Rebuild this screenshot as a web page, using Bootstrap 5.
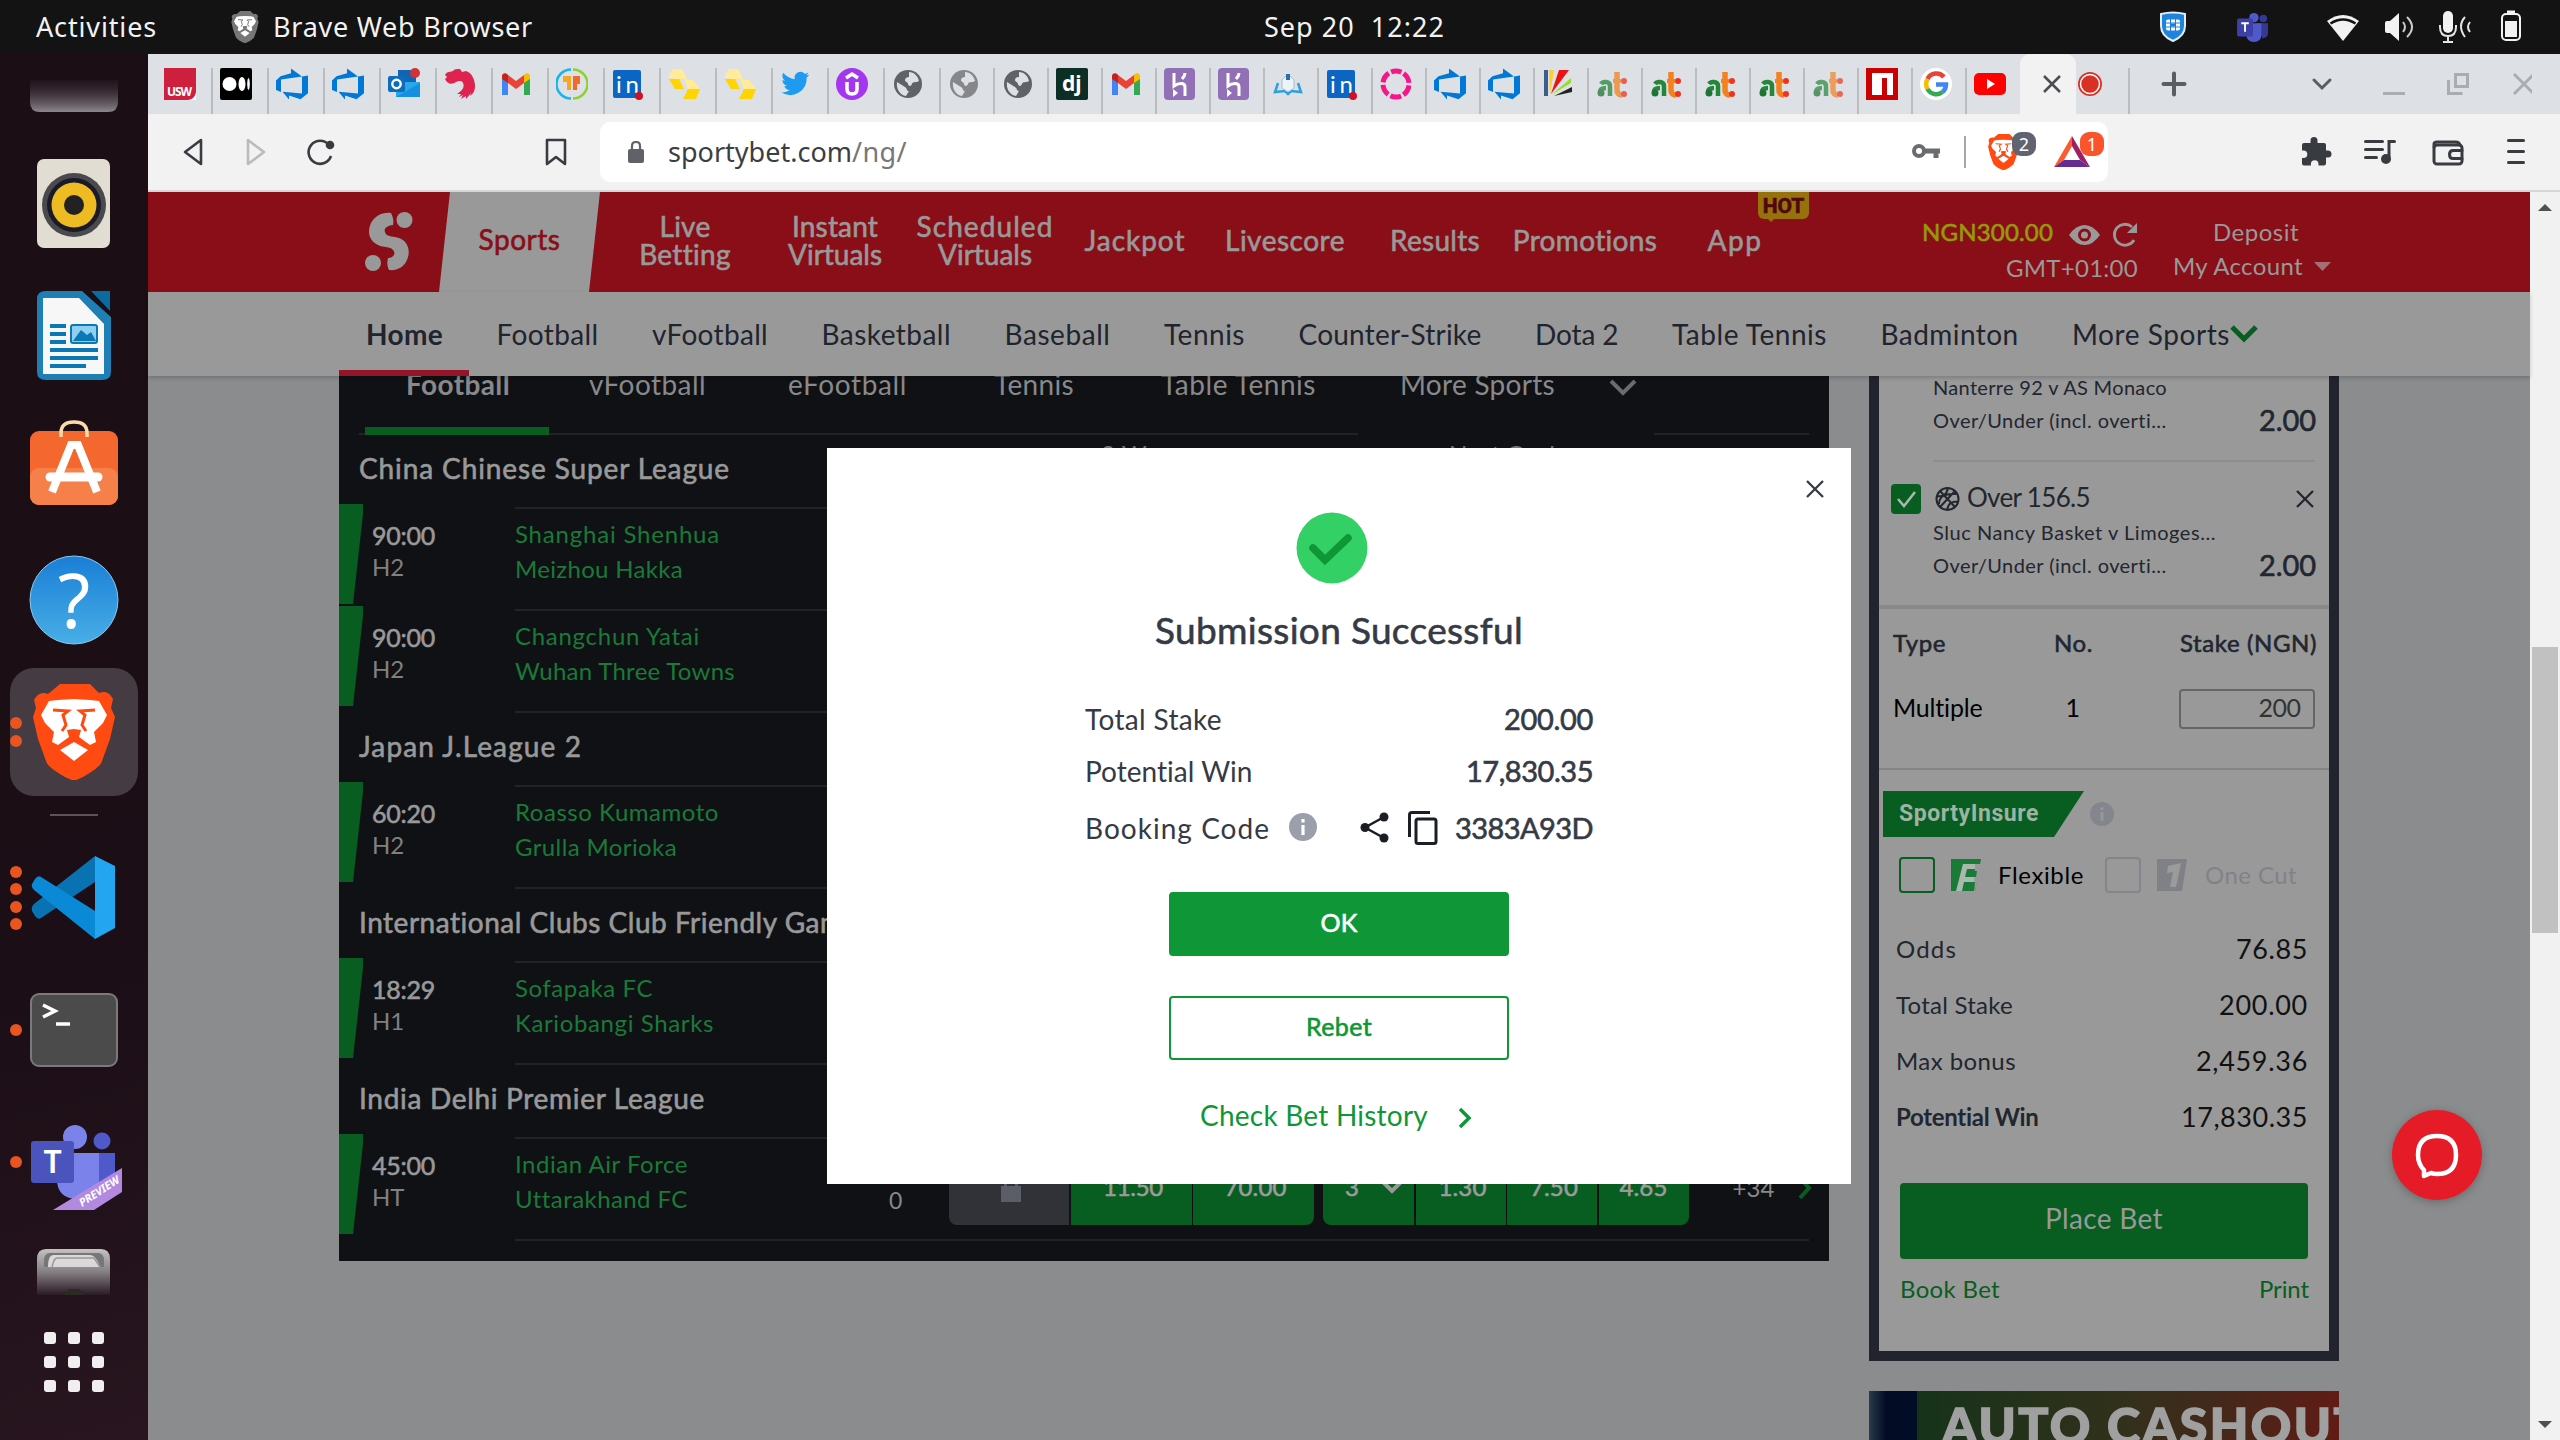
<!DOCTYPE html>
<html lang="en">
<head>
<meta charset="utf-8">
<title>SportyBet</title>
<link href="https://cdn.jsdelivr.net/npm/bootstrap@5.3.0/dist/css/bootstrap.min.css" rel="stylesheet">
<script src="https://cdn.jsdelivr.net/npm/bootstrap@5.3.0/dist/js/bootstrap.bundle.min.js"></script>
<style>
body{width:2560px;height:1440px;overflow:hidden;margin:0;font-family:Lato,"Noto Sans",sans-serif;font-size:28px;line-height:1.2;background:#8b8c8e;color:#22262f}
svg{display:block;flex:none}
[data-w]{display:inline-block;white-space:nowrap;flex:none}
.med{-webkit-text-stroke:.6px currentColor}
.sysbar{height:54px;background:#131313;color:#f2f2f2;font-family:"Noto Sans",sans-serif;font-size:27px;line-height:54px}
.dock{width:148px;height:1386px;background:linear-gradient(165deg,#1b0e15 0,#1b0e16 65%,#28151f 100%)}
.dock text{font-family:"Noto Sans",sans-serif}
.tabstrip{height:60px;background:#dde1e5;padding-left:9px}
.btab{width:54px;height:46px;margin-top:14px;padding-left:7px;border-right:2px solid #b9bdbf}
.btab.wide{width:56px}
.btab text{font-family:"Noto Sans",sans-serif;font-weight:700}
.activetab{width:56px;height:60px;background:#f2f2f2;border-radius:10px 10px 0 0}
.toolbar{height:78px;background:#f2f2f2;border-bottom:2px solid #d3d7da}
.omnibox{width:1508px;height:60px;background:#fff;border-radius:10px;font-family:"Noto Sans",sans-serif;font-size:27px;line-height:58px;color:#3b3e42}
.pagecol{width:2382px}
.scrollcol{width:30px;background:#f1f1f1}
.scrollthumb{width:26px;height:286px;background:#c1c1c1;margin:0 2px}
.masthead{height:100px;background:#890e17;color:#999}
.sporttab{width:161px;height:100px;background:#999;color:#890e17;clip-path:polygon(11px 0,100% 0,150px 100%,0 100%);padding-bottom:5px}
.mainnav{width:150px;height:100px;padding-bottom:5px;line-height:28px;position:relative}
.hotflag{position:absolute;left:98px;top:0;width:51px;height:27px;background:#96710c;border-radius:0 0 6px 6px;color:#50080d;font:700 21px/29px Roboto,sans-serif;text-align:center}
.hotflag::after{content:"";position:absolute;left:9px;top:26px;border:4px solid transparent;border-top-color:#96710c}
.acct{font-size:24px}
.subnav{height:84px;background:#999;padding:2px 0 0 218px;gap:53.5px;color:#20242e;box-shadow:0 2px 4px rgba(0,0,0,.18);position:relative;z-index:2}
.subnav .home{position:relative;font-weight:700}
.homeline{position:absolute;left:191px;bottom:0;width:130px;height:6px;background:#921628}
.board{width:1490px;height:885px;margin-left:191px;background:#101115;color:#999;overflow:hidden}
.boardtabs{height:51px;line-height:16px;color:#88898b;padding-left:67px}
.hair{height:2px;background:#222327}
.league{height:69px;line-height:66px;padding-left:20px}
.colhead{font-size:24px;line-height:37px;color:#76777a}
.match{height:102px}
.flagbar{width:24px;height:100px;background:#085d21;clip-path:polygon(0 0,100% 0,100% 10px,14px 100%,0 100%)}
.clock{width:143px;margin-left:9px;padding-top:14.5px;line-height:32px;font-size:25px}
.clock .half{font-size:24px;color:#7f8083}
.teams{width:1294px;margin-top:3px;border-top:2px solid #222327}
.teams>*{flex:none}
.names{width:374px;padding-top:7px;line-height:35px;font-size:24px;color:#1a7a38}
.rulewrap{padding:3px 20px 0 176px}
.odd{height:76px;line-height:76px;font-size:24px;background:#085d21;color:#9b9b9b;margin-top:10px;text-align:center}
.slip{width:470px;height:985px;margin-left:40px;border:10px solid #21242d;border-top:0;background:#999;color:#22262f}
.sm{font-size:20px}
.tick{width:30px;height:30px;background:#085d21;border-radius:4px}
.stakebox{width:136px;height:40px;border:2px solid #666;border-radius:4px;font-size:25px;line-height:33px;color:#333;padding-right:12px}
.insure{width:201px;height:46px;background:#085d21;clip-path:polygon(0 0,100% 0,171px 100%,0 100%);font:700 23px/45px Roboto,sans-serif;color:#9fb3a3;padding-left:16px}
.cbox{width:36px;height:36px;border:2px solid #085d21;border-radius:4px}
.sumrow{height:56px;line-height:56px;font-size:24px;padding:0 21px 0 17px}
.sumrow .val{font-size:27px;color:#111}
.place{width:408px;height:76px;margin:38px 0 0 21px;padding:0 0 5px;background:#085d21;border:0;border-radius:4px;color:#999;font-size:28px;line-height:71px}
.promo{width:470px;height:49px;margin:30px 0 0 40px;overflow:hidden;background:linear-gradient(90deg,#16331a 48px,#33301b 260px,#44281a 350px,#601c15 100%);color:#a0a0a0;font-weight:900;font-size:50px;line-height:69px;-webkit-text-stroke:1.5px #a0a0a0}
.promo i{width:48px;height:49px;flex:none;background:linear-gradient(90deg,#2b3a4c,#020c24 35%,#000d26)}
.result{position:absolute;left:827px;top:448px;width:1024px;height:736px;background:#fff;color:#353a45;z-index:5}
.rrow{padding:0 258px;line-height:54px}
.rrow .val{font-size:29px}
.result .btn{width:340px;height:64px;border-radius:4px;border:2px solid #0f9737;font-size:25px;padding:0 0 4px;line-height:56px}
.chat{position:absolute;left:2392px;top:1110px;z-index:6;filter:drop-shadow(0 2px 4px rgba(0,0,0,.25))}
</style>
</head>
<body>
<svg width="0" height="0" style="position:absolute">
<defs>
<symbol id="devops" viewBox="0 0 32 32"><path fill="#0078d7" d="M32 7.500v17.800l-7.500 6L13 27.500v4L6.500 23.800 26 25.500V8.500zM26 8.500L15 .5v4.700L4.500 8.200 0 12.500V22l5 2V11.500z"/></symbol>
<symbol id="gmail" viewBox="0 0 32 32"><path fill="#4285f4" d="M2 8v19h6V14z"/><path fill="#34a853" d="M30 8v19h-6V14z"/><path fill="#ea4335" d="M8 7l8 6 8-6v8l-8 6-8-6z"/><path fill="#c5221f" d="M2 8c0-3 4-4 6-1v8l-6-4z"/><path fill="#fbbc04" d="M30 8c0-3-4-4-6-1v8l6-4z"/></symbol>
<symbol id="linkedin" viewBox="0 0 32 32"><rect x="1" y="2" width="28" height="28" rx="2" fill="#0a66c2"/><text x="4" y="25" font-size="24" fill="#fff" textLength="23">in</text><circle cx="27" cy="28" r="4" fill="#d11124"/></symbol>
<symbol id="hex" viewBox="0 0 32 32"><path fill="#ffeb99" d="M4 1h10l5 10H9zM0 10l5-9 4 10zM16 11l9 1 7 9H20z"/><path fill="#ffd400" d="M1 11h10l5 10H7zM20 21h12l-4 10H15z"/></symbol>
<symbol id="globe" viewBox="0 0 32 32"><circle cx="16" cy="16" r="14"/><path fill="#dde1e5" d="M17 4c5 0 9 4 10 9-3 2-6 0-7 3s-4 2-4 0-3-2-3-4 2-3 4-3zM5 14l8 5c3 2 1 4 4 4l-3 5C8 27 4 21 5 14z"/></symbol>
<symbol id="heroku" viewBox="0 0 32 32"><rect width="31" height="32" rx="4" fill="#9270b6"/><path d="M10 5v13c4-3 11-4 11 1v9M21 5c0 3-1 4-3 6" fill="none" stroke="#fff" stroke-width="3"/><path d="M9 21l5 4-5 4z" fill="#fff"/></symbol>
<symbol id="at" viewBox="0 0 32 32"><path d="M5 16c2-3 9-3 9 2v10M10 20c-4 0-6 1-6 4" fill="none" stroke="#23873b" stroke-width="4.500"/><circle cx="5" cy="25" r="3.500" fill="#1d7433"/><path d="M21 4v18c0 4 3 5 5 5" fill="none" stroke="#f48120" stroke-width="5.500"/><path d="M17 13h8" stroke="#f48120" stroke-width="4"/><circle cx="28" cy="13" r="3" fill="#e32"/><circle cx="28" cy="26" r="3" fill="#e32"/></symbol>
<symbol id="info" viewBox="0 0 28 28"><circle cx="14" cy="14" r="14" fill="currentColor"/><path d="M14 6v3.400M14 12v10" stroke="var(--dot,#fff)" stroke-width="3.200"/></symbol>
<symbol id="lion" viewBox="0 0 82 96"><path d="M27 0h30l9 9c6-2 10-1 14 6l-2 9 4 9-5 22-8 22c-1 5-9 10-19 16l-9 4-9-4C22 87 14 82 13 77L5 55 0 33l3-9-2-8C5 9 10 8 15 10z" fill="var(--mane,#ff4a12)"/><path d="M41 15l16 1 9 1 8 14-4 8-9 9 2 10-6 3-11-8 2-7-7-1-7 1 2 7-11 8-6-3 2-10-9-9-4-8 8-14 9-1z" fill="#fff"/><path d="M41 58l14 8-14 11-14-11z" fill="#fff"/><path d="M20 26l15 1-5 4 3 10-4 6M62 26l-15 1 5 4-3 10 4 6" fill="none" stroke="var(--mane,#ff4a12)" stroke-width="3"/></symbol>
<symbol id="teamsico" viewBox="0 0 34 32"><circle cx="18" cy="6" r="5" fill="#5059c9"/><circle cx="28" cy="7" r="4" fill="#343a94"/><path d="M21 12h12v10c0 4-3 6-6 6z" fill="#343a94"/><path d="M10 12h16v12c0 5-3 8-8 8s-8-3-8-8z" fill="#5059c9"/><rect y="7" width="17" height="19" rx="2" fill="#3c41a8"/><path d="M4.500 12h8M8.500 12v9" stroke="#fff" stroke-width="2"/></symbol>
</defs>
</svg>

<!-- System bar -->
<div class="sysbar d-flex align-items-center">
  <span data-w="121" style="margin-left:36px">Activities</span>
  <svg width="28" height="32" style="margin:0 14px 0 74px;--mane:#777"><use href="#lion"/></svg>
  <span data-w="260">Brave Web Browser</span>
  <span data-w="181" style="margin-left:731px;white-space:pre">Sep 20  12:22</span>
  <svg width="390" height="54" viewBox="2150 0 390 54" style="margin-left:706px">
    <path d="M2160 14q12-3 24 0v12q0 10-12 15-12-5-12-15z" fill="#1d83dc" stroke="#e4eef7" stroke-width="2"/><rect x="2165" y="19.500" width="14" height="11" rx="2" fill="#fff"/><path d="M2165 23h14M2165 27h14M2169.500 19v12M2174.500 19v12" stroke="#1d7ed6" stroke-width="1"/><rect x="2170" y="23.500" width="4" height="3" fill="#1d7ed6"/>
    <use href="#teamsico" x="2235" y="12" width="34" height="30"/>
    <path d="M2326 21q16-12 32 0l-16 20z" fill="#f2f2f2"/><path d="M2329.500 23.500q12.500-8 25 0" stroke="#131313" stroke-width="2.500" fill="none"/>
    <path d="M2384 23q0-2 2-2h3l9-8v28l-9-8h-3q-2 0-2-2z" fill="#f2f2f2"/><path d="M2402 22q4 5 0 10M2406 17q10 10 0 20" stroke="#ccc" stroke-width="2" fill="none"/>
    <rect x="2442" y="11" width="10" height="22" rx="5" fill="#f2f2f2"/><path d="M2439 25v2q0 9 8 9t8-9v-2M2447 36v6M2442 42h10M2464 17q-8 9 0 20M2469 22q-4 5 0 10" stroke="#e5e5e5" stroke-width="2" fill="none"/>
    <rect x="2501" y="14" width="18" height="26" rx="4" fill="none" stroke="#f2f2f2" stroke-width="2"/><rect x="2504" y="21" width="12" height="16" fill="#f2f2f2"/><path d="M2506 12h8" stroke="#f2f2f2" stroke-width="3"/>
  </svg>
</div>

<div class="d-flex">
<!-- Dock -->
<aside class="dock">
  <svg width="148" height="86" viewBox="0 54 148 86"><defs><linearGradient id="g1" x2="0" y2="1"><stop stop-color="#3a2c36" stop-opacity=".2"/><stop offset="1" stop-color="#8d878c"/></linearGradient><linearGradient id="g2" x2="0" y2="1"><stop stop-color="#c4c2c3"/><stop offset=".5" stop-color="#857f83"/><stop offset="1" stop-color="#2a1a24"/></linearGradient></defs><path d="M30 80h88v22q0 10-10 10H40q-10 0-10-10z" fill="url(#g1)"/></svg>
  <svg width="148" height="130" viewBox="0 140 148 130"><rect x="37" y="159" width="73" height="89" rx="7" fill="#e2ddd2"/><circle cx="74" cy="205" r="32" fill="#4a4a4e"/><circle cx="74" cy="205" r="27" fill="#1a1a28"/><circle cx="74" cy="205" r="22.500" fill="#eebb22"/><circle cx="74" cy="205" r="10" fill="#222"/></svg>
  <svg width="148" height="130" viewBox="0 270 148 130"><path d="M46 291h36l29 26v55q0 8-9 8H46q-9 0-9-8v-73q0-8 9-8z" fill="#1d7fb4"/><path d="M43 298h36l25 26v50H43z" fill="#f7f7f7"/><path d="M91 291h19v20z" fill="#0a6ba0"/><path d="M50 326h16M50 334h16M50 342h16M50 350h48M50 358h48M50 366h36" stroke="#0a78b5" stroke-width="4"/><rect x="71" y="325" width="26" height="18" rx="2" fill="#8fd0f0" stroke="#0a78b5" stroke-width="2"/><path d="M73 341l8-11 6 5 4-3 5 9z" fill="#0a78b5"/></svg>
  <svg width="148" height="130" viewBox="0 400 148 130"><rect x="30" y="431" width="88" height="74" rx="9" fill="#f4672f"/><rect x="30" y="468" width="88" height="37" rx="9" fill="#f58049"/><path d="M61 437v-4q0-11 13-11t13 11v4" fill="none" stroke="#fbdba9" stroke-width="3.500"/><path d="M52 492l19-47h7l19 47" fill="none" stroke="#fff" stroke-width="8"/><path d="M50 477h48" stroke="#fff" stroke-width="9" stroke-linecap="round"/></svg>
  <svg width="148" height="125" viewBox="0 530 148 125"><defs><linearGradient id="hb" x2="0" y2="1"><stop stop-color="#1a7fd6"/><stop offset="1" stop-color="#48aee6"/></linearGradient></defs><circle cx="74" cy="600" r="44" fill="url(#hb)" stroke="#8cc8ee" stroke-width="1"/><text x="74" y="628" font-size="74" text-anchor="middle" fill="#fff">?</text></svg>
  <svg width="148" height="175" viewBox="0 655 148 175"><rect x="10" y="668" width="128" height="128" rx="24" fill="#453b42"/><use href="#lion" x="33" y="684" width="82" height="96"/><g fill="#e95420"><circle cx="16" cy="723" r="6"/><circle cx="16" cy="741" r="6"/></g><path d="M50 815h48" stroke="#5d545a" stroke-width="2"/></svg>
  <svg width="148" height="140" viewBox="0 830 148 140"><path d="M95 856l20 10v62l-20 11z" fill="#23a5f0"/><path d="M95 856v26L41 918q-3 2-6-2l-3-5q-1-4 2-7z" fill="#0872b3"/><path d="M95 939v-28L41 877q-3-2-6 2l-3 5q-1 3 2 6z" fill="#0a8ad6"/><g fill="#e95420"><circle cx="16" cy="872" r="6"/><circle cx="16" cy="889" r="6"/><circle cx="16" cy="907" r="6"/><circle cx="16" cy="924" r="6"/></g></svg>
  <svg width="148" height="130" viewBox="0 970 148 130"><rect x="31" y="994" width="86" height="72" rx="8" fill="#4b4b4b" stroke="#7a7a7a" stroke-width="2"/><path d="M43 1005l12 6-12 6M56 1024h14" fill="none" stroke="#fff" stroke-width="3.500"/><circle cx="16" cy="1030" r="6" fill="#e95420"/></svg>
  <svg width="148" height="130" viewBox="0 1100 148 130"><circle cx="75" cy="1137" r="12" fill="#7b83eb"/><circle cx="102" cy="1141" r="8.500" fill="#5059c9"/><path d="M90 1153h25v36l-25 10z" fill="#5059c9"/><path d="M57 1153h42v30q0 16-21 16t-21-20z" fill="#7b83eb"/><rect x="31" y="1141" width="43" height="42" rx="3" fill="#4b53bc"/><text x="52.500" y="1173" font-size="32" font-weight="600" text-anchor="middle" fill="#fff">T</text><path d="M53 1210l69-42v24l-28 18z" fill="#b18ae0"/><text transform="translate(82 1207) rotate(-33)" font-size="11" font-weight="700" font-style="italic" fill="#fff" textLength="46">PREVIEW</text><circle cx="16" cy="1162" r="6" fill="#e95420"/></svg>
  <svg width="148" height="80" viewBox="0 1230 148 80"><path d="M37 1295v-36q0-10 9-10h55q9 0 9 10v36z" fill="url(#g2)"/><path d="M44 1267v-6q0-8 6-8h48q6 0 6 8v6z" fill="#777"/><path d="M48 1267q0-13 6-12h36q6 0 10 12z" fill="#dad8d8"/><path d="M52 1267q2-10 6-9h36l6 9" fill="none" stroke="#999" stroke-width="1.500"/><path d="M64 1295l5-6h10l5 6z" fill="#2b2b22"/></svg>
  <svg width="148" height="130" viewBox="0 1310 148 130" fill="#f0eeee"><rect x="44" y="1332" width="12" height="12" rx="3"/><rect x="68" y="1332" width="12" height="12" rx="3"/><rect x="92" y="1332" width="12" height="12" rx="3"/><rect x="44" y="1356" width="12" height="12" rx="3"/><rect x="68" y="1356" width="12" height="12" rx="3"/><rect x="92" y="1356" width="12" height="12" rx="3"/><rect x="44" y="1380" width="12" height="12" rx="3"/><rect x="68" y="1380" width="12" height="12" rx="3"/><rect x="92" y="1380" width="12" height="12" rx="3"/></svg>
</aside>

<main style="width:2412px">
  <!-- Browser tabs -->
  <div class="tabstrip d-flex">
    <div class="btab wide"><svg width="32" height="32"><path d="M0 0h32v24q-1 7-8 8H0z" fill="#cf1f3f"/><path d="M32 25v7h-7q6-1 7-7z" fill="#fff"/><text x="3" y="28" font-size="12" fill="#fff" textLength="25">USW</text></svg></div>
    <div class="btab wide"><svg width="32" height="32"><rect width="32" height="32" rx="2"/><circle cx="9.500" cy="16" r="7" fill="#fff"/><ellipse cx="22" cy="16" rx="3.500" ry="7" fill="#fff"/><ellipse cx="28.500" cy="16" rx="1.300" ry="6" fill="#fff"/></svg></div>
    <div class="btab wide"><svg width="32" height="32"><use href="#devops"/></svg></div>
    <div class="btab wide"><svg width="32" height="32"><use href="#devops"/></svg></div>
    <div class="btab wide"><svg width="34" height="32"><rect x="10" y="2" width="18" height="18" fill="#1066b5"/><path d="M8 14h24v15H8z" fill="#28a8ea"/><path d="M8 29l24-14v14z" fill="#1490df"/><rect y="8" width="17" height="16" rx="2" fill="#0f6cbd"/><circle cx="8.500" cy="16" r="4.200" fill="none" stroke="#fff" stroke-width="2.400"/><circle cx="27" cy="5" r="5" fill="#d13438"/></svg></div>
    <div class="btab wide"><svg width="32" height="32"><path fill="#e0234e" d="M16 1l2 3 4-1c6 2 9 9 9 15 0 5-2 8-5 10l1-3-5 6 0-3-5 3 2-4-4 2 2-3-4 0c5-3 8-7 6-11-1-3-5-2-7-1-4 3-9 2-11-3l2-2-2-2c2-4 6-3 8-4 1-2 4-2 7-2z"/></svg></div>
    <div class="btab wide"><svg width="32" height="32"><use href="#gmail"/></svg></div>
    <div class="btab wide"><svg width="32" height="32"><path d="M15 1.500a14.500 14.500 0 0 0 0 29" fill="none" stroke="#19b5e8" stroke-width="2.500"/><path d="M17 1.500a14.500 14.500 0 0 1 0 29" fill="none" stroke="#8cd32c" stroke-width="2.500"/><path d="M7 8h8v14h-4v-8H7z" fill="#f5a623"/><path d="M17 8h7v8h-3v6h-4z" fill="#f26a2a"/></svg></div>
    <div class="btab wide"><svg width="32" height="32"><use href="#linkedin"/></svg></div>
    <div class="btab wide"><svg width="32" height="32"><use href="#hex"/></svg></div>
    <div class="btab wide"><svg width="32" height="32"><use href="#hex"/></svg></div>
    <div class="btab wide"><svg width="32" height="32" viewBox="-1 -1 27 27"><path fill="#1d9bf0" d="M23.600 4.600c-.9.400-1.800.6-2.800.8 1-.6 1.800-1.600 2.200-2.700-1 .6-2 1-3.100 1.200a4.900 4.900 0 0 0-8.400 4.500C7.700 8.100 4.100 6.100 1.700 3.100a4.900 4.900 0 0 0 1.500 6.600c-.8 0-1.600-.2-2.200-.6v.1c0 2.400 1.700 4.400 3.900 4.800-.7.200-1.500.2-2.200.1.600 2 2.400 3.400 4.600 3.400A9.900 9.900 0 0 1 0 19.500a13.900 13.900 0 0 0 21.500-12.400c.8-.6 1.500-1.500 2.100-2.500z"/></svg></div>
    <div class="btab wide"><svg width="32" height="32"><circle cx="16" cy="16" r="16" fill="#a435f0"/><path d="M11 14v7q0 5 5 5t5-5v-7M10 10l6-4 6 4" fill="none" stroke="#fff" stroke-width="3.500"/></svg></div>
    <div class="btab wide"><svg width="32" height="32" fill="#5f6368"><use href="#globe"/></svg></div>
    <div class="btab"><svg width="32" height="32" fill="#85878a"><use href="#globe"/></svg></div>
    <div class="btab"><svg width="32" height="32" fill="#5f6368"><use href="#globe"/></svg></div>
    <div class="btab"><svg width="32" height="32"><rect width="32" height="32" rx="2" fill="#0c2e24"/><text x="6" y="23" font-size="21" fill="#fff">dj</text></svg></div>
    <div class="btab"><svg width="32" height="32"><use href="#gmail"/></svg></div>
    <div class="btab"><svg width="32" height="32"><use href="#heroku"/></svg></div>
    <div class="btab"><svg width="32" height="32"><use href="#heroku"/></svg></div>
    <div class="btab"><svg width="32" height="32"><path d="M6 15l-3 9 10-1 3 3 3-3 10 1-3-9" fill="none" stroke="#2b9fe0" stroke-width="2.500"/><path d="M16 6l6 6v8l-6 4-6-4v-8z" fill="#eef3f7" stroke="#a5c0d2"/><path d="M16 6v6" stroke="#2b6fa8" stroke-width="4"/></svg></div>
    <div class="btab"><svg width="32" height="32"><use href="#linkedin"/></svg></div>
    <div class="btab"><svg width="32" height="32"><circle cx="16" cy="16" r="13" fill="none" stroke="#f6168a" stroke-width="5" stroke-dasharray="11 2.610" stroke-dashoffset="5.500" transform="rotate(-90 16 16)"/></svg></div>
    <div class="btab"><svg width="32" height="32"><use href="#devops"/></svg></div>
    <div class="btab"><svg width="32" height="32"><use href="#devops"/></svg></div>
    <div class="btab"><svg width="32" height="32"><path d="M2 2h4v26H2z" fill="#3b5f8a"/><path d="M7 2h5L8 26z" fill="#fc3"/><path d="M17 2h10L9 26z" fill="#e11"/><path d="M29 10v5L9 27z" fill="#9d3"/><path d="M30 19v5l-18 4z" fill="#222"/></svg></div>
    <div class="btab"><svg width="32" height="32" opacity=".75"><use href="#at"/></svg></div>
    <div class="btab"><svg width="32" height="32"><use href="#at"/></svg></div>
    <div class="btab"><svg width="32" height="32"><use href="#at"/></svg></div>
    <div class="btab"><svg width="32" height="32"><use href="#at"/></svg></div>
    <div class="btab"><svg width="32" height="32" opacity=".7"><use href="#at"/></svg></div>
    <div class="btab"><svg width="32" height="32"><path fill="#cb0000" d="M0 0h32v32H0z"/><path fill="#fff" d="M6 5h21v22h-6V10h-5v17H6z"/></svg></div>
    <div class="btab"><svg width="32" height="32"><circle cx="16" cy="16" r="16" fill="#fff"/><g fill="none" stroke-width="4.500"><path d="M24 9a10 10 0 0 0-16.500 2" stroke="#ea4335"/><path d="M7.500 11a10 10 0 0 0 0 10" stroke="#fbbc04"/><path d="M7.500 21a10 10 0 0 0 15 3" stroke="#34a853"/><path d="M22.500 24a10 10 0 0 0 3.500-7.500H16" stroke="#4285f4"/></g></svg></div>
    <div class="btab border-0" style="width:53px"><svg width="32" height="32"><rect y="5" width="32" height="22" rx="5" fill="#f00"/><path fill="#fff" d="M13 11l8 5-8 5z"/></svg></div>
    <div class="activetab"><svg width="56" height="60"><path d="M24 22l16 16M40 22L24 38" stroke="#4a4d51" stroke-width="2.500"/></svg></div>
    <svg width="456" height="60" viewBox="2076 54 456 60"><circle cx="2090" cy="84" r="12" fill="#d93025"/><circle cx="2090" cy="84" r="9.500" fill="none" stroke="#fff" stroke-width="1.500"/><path d="M2129 68v46" stroke="#b9bdbf" stroke-width="2"/><g stroke="#5a5d61" fill="none" stroke-linecap="round"><path d="M2163.500 84h21M2174 73.500v21" stroke-width="4"/><path d="M2314 80l8 8 8-8" stroke-width="3"/></g><path d="M2383 93.500h22M2455.500 74.500h12v12h-12zM2448.500 80v13.500h14M2514 74l20 20M2534 74l-20 20" fill="none" stroke="#a9adb1" stroke-width="3"/></svg>
  </div>
  <!-- Address bar -->
  <div class="toolbar d-flex align-items-center">
    <svg width="452" height="76" viewBox="148 114 452 76" fill="none" stroke="#383c40" stroke-width="2.600" stroke-linejoin="round"><path d="M201 140v24l-16-12z"/><path d="M248 140v24l16-12z" stroke="#bbb"/><path d="M331 156a11.500 11.500 0 1 1-2-11"/><circle cx="330" cy="145" r="3" fill="#383c40"/><path d="M547 140h18v24l-9-7-9 7z"/></svg>
    <div class="omnibox d-flex align-items-center">
      <svg width="16" height="22" viewBox="0 0 16 22" style="margin:0 24px 0 28px"><rect y="8" width="16" height="14" rx="2" fill="#5f6368"/><path d="M4 9V5q0-4 4-4t4 4v4" fill="none" stroke="#5f6368" stroke-width="2.200"/></svg>
      <span data-w="184">sportybet.com</span><span data-w="55" style="color:#777">/ng/</span>
      <svg width="201" height="60" viewBox="1907 122 201 60" class="ms-auto"><circle cx="1919" cy="151" r="5" fill="none" stroke="#6a6d70" stroke-width="4"/><path d="M1925 151h15M1936 151v7" stroke="#6a6d70" stroke-width="5"/><path d="M1965 136v32" stroke="#a8a8a8" stroke-width="2"/><use href="#lion" x="1987" y="134" width="33" height="36"/><path d="M2072 136l-18 31 10-7 8-14z" fill="#ff5a2e"/><path d="M2072 136l18 31-10-7-8-14z" fill="#9e1f63"/><path d="M2054 167h36l-10-7h-16z" fill="#662d91"/><rect x="2012" y="132" width="24" height="24" rx="9" fill="#5f6470"/><rect x="2080" y="132" width="24" height="24" rx="9" fill="#fb542b"/><text x="2024" y="151" font-size="18" text-anchor="middle" fill="#fff">2</text><text x="2092" y="151" font-size="18" text-anchor="middle" fill="#fff">1</text></svg>
    </div>
    <svg width="452" height="76" viewBox="2108 114 452 76" fill="none" stroke="#383c40" stroke-width="3" stroke-linecap="round"><path d="M2304 143h6.500v-2.500a3.500 3.500 0 0 1 7 0V143h6.500q2 0 2 2v5.500h2a3.500 3.500 0 0 1 0 7h-2v6q0 2-2 2h-5.500v-1.500a3.800 3.800 0 0 0-7.600 0v1.500H2304q-2 0-2-2V158h1.500a3.800 3.800 0 0 0 0-7.600H2302V145q0-2 2-2z" fill="#383c40" stroke="none"/><path d="M2365.500 141.500h17M2365.500 149.500h17M2365.500 157.500h11M2394.500 141.500h-5.500v17"/><circle cx="2386" cy="159" r="5" fill="#383c40" stroke="none"/><rect x="2434" y="145" width="28" height="19" rx="3"/><path d="M2434 147v-3q0-2 3-2h19q3 0 4 3M2462 150.500h-9q-3.500 0-3.500 4t3.500 4h9"/><path d="M2508.500 140.500h15M2508.500 151.500h15M2508.500 162.500h15"/></svg>
  </div>

  <div class="d-flex" style="height:1248px">
  <div class="pagecol">
    <header class="masthead d-flex">
      <svg width="48" height="60" viewBox="0 0 48 60" style="margin:20px 26px 0 217px" fill="#999"><circle cx="39.500" cy="8" r="8"/><circle cx="8" cy="51" r="8"/><path d="M26 1c2 4 3 8 2 12-8 1-10 5-7 9 2 3 8 2 13 4 9 3 12 13 8 22-3 7-10 11-18 10-2-4-2-8-1-12 6 0 8-5 5-8-3-4-9-2-15-5C4 29 2 20 6 11 10 4 17 0 26 1z"/></svg>
      <div class="sporttab d-flex align-items-center justify-content-center med"><span data-w="82">Sports</span></div>
      <div class="d-flex med text-center" style="margin-left:10px">
        <div class="mainnav d-flex flex-column align-items-center justify-content-center"><span data-w="51">Live</span><span data-w="91">Betting</span></div>
        <div class="mainnav d-flex flex-column align-items-center justify-content-center"><span data-w="86">Instant</span><span data-w="94">Virtuals</span></div>
        <div class="mainnav d-flex flex-column align-items-center justify-content-center"><span data-w="137">Scheduled</span><span data-w="94">Virtuals</span></div>
        <div class="mainnav d-flex flex-column align-items-center justify-content-center"><span data-w="101">Jackpot</span></div>
        <div class="mainnav d-flex flex-column align-items-center justify-content-center"><span data-w="120">Livescore</span></div>
        <div class="mainnav d-flex flex-column align-items-center justify-content-center"><span data-w="90">Results</span></div>
        <div class="mainnav d-flex flex-column align-items-center justify-content-center"><span data-w="145">Promotions</span></div>
        <div class="mainnav d-flex flex-column align-items-center justify-content-center"><span data-w="55">App</span><span class="hotflag">HOT</span></div>
      </div>
      <div class="acct d-flex flex-column align-items-end" style="width:328px;padding-top:22px;line-height:36px">
        <div class="d-flex align-items-center"><span class="med" data-w="131" style="color:#96990a">NGN300.00</span>
          <svg width="31" height="24" viewBox="0 0 31 24" style="margin:5px 12px 0 16px"><path d="M0 12Q7 2 15.500 2T31 12q-7 10-15.500 10T0 12z" fill="#999"/><circle cx="15.500" cy="12" r="6.500" fill="#890e17"/><circle cx="15.500" cy="12" r="3.500" fill="#999"/></svg>
          <svg width="26" height="26" viewBox="0 0 26 26" style="margin-top:5px"><path d="M22 18A10.500 10.500 0 1 1 20 5" fill="none" stroke="#999" stroke-width="2.800"/><path d="M25 1v10H15z" fill="#999"/></svg></div>
        <span data-w="132">GMT+01:00</span>
      </div>
      <div class="acct" style="margin-left:35px;padding-top:23px;line-height:34px">
        <div style="padding-left:40px"><span data-w="86">Deposit</span></div>
        <div class="d-flex align-items-center"><span data-w="130">My Account</span><svg width="17" height="9" style="margin-left:11px"><path d="M0 0h17l-8.500 9z" fill="#a57074"/></svg></div>
      </div>
    </header>
    <nav class="subnav d-flex align-items-center">
      <span class="home" data-w="77">Home</span><span data-w="102">Football</span><span data-w="116">vFootball</span><span data-w="129.500">Basketball</span><span data-w="106">Baseball</span><span data-w="81">Tennis</span><span data-w="183">Counter-Strike</span><span data-w="83.500">Dota 2</span><span data-w="155">Table Tennis</span><span data-w="138">Badminton</span>
      <div class="d-flex align-items-center"><span data-w="158">More Sports</span><svg width="28" height="18" style="margin-bottom:3px"><path d="M2 2l12 12L26 2" fill="none" stroke="#085d21" stroke-width="5"/></svg></div>
      <i class="homeline"></i>
    </nav>
    <div class="d-flex">
      <section class="board">
        <div class="boardtabs d-flex">
          <span class="fw-bold" data-w="104">Football</span><span data-w="117" style="margin-left:79px">vFootball</span><span data-w="119" style="margin-left:82px">eFootball</span><span data-w="80" style="margin-left:87px">Tennis</span><span data-w="155" style="margin-left:87px">Table Tennis</span><span data-w="155" style="margin-left:84px">More Sports</span>
          <svg width="28" height="18" style="margin:3px 0 0 54px"><path d="M2 2l12 12L26 2" fill="none" stroke="#6a6b6e" stroke-width="4"/></svg>
        </div>
        <div class="d-flex align-items-end" style="padding-left:20px"><div class="hair" style="width:6px"></div><div style="width:184px;height:8px;background:#085d21"></div><div class="hair" style="width:809px"></div><div class="hair" style="width:155px;margin-left:296px"></div></div>
        <div class="league d-flex"><span class="med" data-w="371">China Chinese Super League</span><span class="colhead" data-w="70" style="margin-left:371px">3 Way</span><span class="colhead" data-w="106" style="margin-left:278px">Next Goal</span></div>
        <div class="match d-flex"><div class="flagbar"></div><div class="clock"><div><span class="med" data-w="63">90:00</span></div><div class="half">H2</div></div><div class="teams"><div class="names"><div><span data-w="205">Shanghai Shenhua</span></div><span data-w="168">Meizhou Hakka</span></div></div></div>
        <div class="match d-flex"><div class="flagbar"></div><div class="clock"><div><span class="med" data-w="63">90:00</span></div><div class="half">H2</div></div><div class="teams"><div class="names"><div><span data-w="185">Changchun Yatai</span></div><span data-w="220">Wuhan Three Towns</span></div></div></div>
        <div class="rulewrap"><div class="hair"></div></div>
        <div class="league d-flex"><span class="med" data-w="223">Japan J.League 2</span></div>
        <div class="match d-flex"><div class="flagbar"></div><div class="clock"><div><span class="med" data-w="63">60:20</span></div><div class="half">H2</div></div><div class="teams"><div class="names"><div><span data-w="204">Roasso Kumamoto</span></div><span data-w="162">Grulla Morioka</span></div></div></div>
        <div class="rulewrap"><div class="hair"></div></div>
        <div class="league d-flex"><span class="med" data-w="513">International Clubs Club Friendly Games</span></div>
        <div class="match d-flex"><div class="flagbar"></div><div class="clock"><div><span class="med" data-w="63">18:29</span></div><div class="half">H1</div></div><div class="teams"><div class="names"><div><span data-w="138">Sofapaka FC</span></div><span data-w="199">Kariobangi Sharks</span></div></div></div>
        <div class="rulewrap"><div class="hair"></div></div>
        <div class="league d-flex"><span class="med" data-w="346">India Delhi Premier League</span></div>
        <div class="match d-flex"><div class="flagbar"></div><div class="clock"><div><span class="med" data-w="63">45:00</span></div><div class="half">HT</div></div>
          <div class="teams d-flex"><div class="names"><div><span data-w="173">Indian Air Force</span></div><span data-w="172">Uttarakhand FC</span></div>
            <span style="width:13px;font-size:23px;line-height:122px;color:#888">0</span>
            <div class="d-flex" style="gap:1.500px;margin-left:47px">
              <div class="odd d-flex justify-content-center" style="width:120px;background:#313238;border-radius:8px 0 0 8px"><svg width="20" height="26" style="margin-top:27px;margin-left:4px"><rect y="10" width="20" height="16" fill="#5b5d67"/><path d="M4.500 11V6q0-4 5.500-4t5.500 4v5" fill="none" stroke="#5b5d67" stroke-width="3"/></svg></div>
              <div class="odd med" style="width:121px;padding-left:4px"><span data-w="60">11.50</span></div>
              <div class="odd med" style="width:121px;border-radius:0 8px 8px 0;padding-left:4px"><span data-w="62">70.00</span></div>
            </div>
            <div class="d-flex" style="gap:1.500px;margin-left:9px">
              <div class="odd med d-flex align-items-center" style="width:91px;border-radius:8px 0 0 8px;padding-left:22px">3<svg width="22" height="14" style="margin-left:22px"><path d="M2 2l9 9 9-9" fill="none" stroke="#999" stroke-width="4"/></svg></div>
              <div class="odd med" style="width:90px;padding-left:4px"><span data-w="48">1.30</span></div>
              <div class="odd med" style="width:90px;padding-left:4px"><span data-w="48">7.50</span></div>
              <div class="odd med" style="width:90px;border-radius:0 8px 8px 0"><span data-w="48">4.65</span></div>
            </div>
            <span data-w="42" style="margin-left:44px;font-size:24px;line-height:98px;color:#888">+34</span>
            <svg width="16" height="26" style="margin:37px -6px 0 22px"><path d="M3 2l9 10-9 10" fill="none" stroke="#085d21" stroke-width="4"/></svg>
          </div></div>
        <div class="rulewrap"><div class="hair"></div></div>
      </section>

      <aside>
        <section class="slip">
          <div class="sm" style="padding-left:54px;line-height:22px"><span data-w="234">Nanterre 92 v AS Monaco</span></div>
          <div class="sm d-flex justify-content-between" style="padding:0 13px 0 54px;line-height:44px"><span data-w="234">Over/Under (incl. overti...</span><span class="med" data-w="57" style="font-size:29px">2.00</span></div>
          <div style="height:2px;margin:18px 14px 0 54px;background:#8c8d91"></div>
          <div class="d-flex align-items-center" style="height:44px;margin-top:15px;padding:0 15px 0 12px">
            <div class="tick"><svg width="30" height="30"><path d="M7 15l6 7 11-14" fill="none" stroke="#aab8ad" stroke-width="2.500"/></svg></div>
            <svg width="25" height="24" viewBox="0 0 25 24" fill="none" stroke="#22262f" stroke-width="2" style="margin:0 7px 0 14px"><circle cx="12.500" cy="12" r="11"/><path d="M5 4l15 16M20 4L5 20M2 9q9 2 11-8M23 15q-9-2-11 8M4 17q0-11 17-10"/></svg>
            <span data-w="123" style="font-size:26px;padding-bottom:3px">Over 156.5</span>
            <svg width="18" height="18" class="ms-auto"><path d="M1 1l16 16M17 1L1 17" stroke="#22262f" stroke-width="2.300"/></svg>
          </div>
          <div class="sm" style="padding-left:54px;line-height:22px"><span data-w="283">Sluc Nancy Basket v Limoges...</span></div>
          <div class="sm d-flex justify-content-between" style="padding:0 13px 0 54px;line-height:44px"><span data-w="234">Over/Under (incl. overti...</span><span class="med" data-w="57" style="font-size:29px">2.00</span></div>
          <div style="height:4px;margin-top:18px;background:#88898e"></div>
          <div class="d-flex med" style="height:68px;line-height:68px;font-size:24px;padding-left:14px"><span data-w="53">Type</span><span data-w="39" style="margin-left:108px">No.</span><span data-w="137" style="margin-left:87px">Stake (NGN)</span></div>
          <div class="d-flex" style="height:91px;line-height:60px;font-size:25px;color:#000;padding-left:14px"><span data-w="90">Multiple</span><span style="width:196px;padding-left:83px">1</span><div class="stakebox text-end" style="margin-top:12px"><span data-w="42">200</span></div></div>
          <div style="height:2px;background:#84858b"></div>
          <div class="d-flex align-items-center" style="margin:21px 0 0 4px"><div class="insure"><span data-w="140">SportyInsure</span></div><svg width="24" height="24" style="margin-left:6px;color:#84868d;--dot:#999"><use href="#info"/></svg></div>
          <div class="d-flex align-items-center" style="margin:20px 0 0 20px;font-size:24px;line-height:34px;color:#000">
            <div class="cbox"></div>
            <svg width="30" height="32" viewBox="0 0 30 32" style="margin:0 17px 0 16px"><path d="M0 0h30l-6 32H0z" fill="#1a7a38"/><path d="M12 5h17l-1 5H16l-2 8h11l-1 5H13l-2 9H5z" fill="#aab8ad"/><path d="M24 5h6l-6 27h-1z" fill="#999"/><path d="M17 12h9l-1 6h-9zM14 23h10l-1 9H12z" fill="#1a7a38"/></svg>
            <span data-w="86">Flexible</span>
            <div class="cbox" style="border-color:#858589;margin-left:21px"></div>
            <svg width="30" height="32" viewBox="0 0 30 32" style="margin:0 18px 0 16px"><path d="M0 0h30l-5 32H0z" fill="#808187"/><path d="M11 7l13-3-5 24h-6l3-15-6 1z" fill="#9b9b9b"/></svg>
            <span data-w="92" style="color:#818287">One Cut</span>
          </div>
          <div style="margin-top:28px">
            <div class="sumrow d-flex justify-content-between"><span data-w="61">Odds</span><span class="val" data-w="72">76.85</span></div>
            <div class="sumrow d-flex justify-content-between"><span data-w="117">Total Stake</span><span class="val" data-w="89">200.00</span></div>
            <div class="sumrow d-flex justify-content-between"><span data-w="120">Max bonus</span><span class="val" data-w="112">2,459.36</span></div>
            <div class="sumrow d-flex justify-content-between"><span class="fw-bold" data-w="143">Potential Win</span><span class="val" data-w="127">17,830.35</span></div>
          </div>
          <button class="btn place d-block"><span data-w="118">Place Bet</span></button>
          <div class="d-flex justify-content-between" style="font-size:24px;line-height:60px;color:#085d21;padding:0 20px 0 21px"><span data-w="100">Book Bet</span><span data-w="50">Print</span></div>
        </section>
        <div class="promo d-flex"><i></i><span data-w="424" style="margin-left:25px">AUTO CASHOUT</span></div>
      </aside>
    </div>
  </div>
  <div class="scrollcol">
    <svg width="30" height="455"><path d="M8 19h14l-7-7z" fill="#505050"/></svg>
    <div class="scrollthumb"></div>
    <svg width="30" height="507"><path d="M8 488h14l-7 7z" fill="#505050"/></svg>
  </div>
  </div>
</main>
</div>

<!-- Bet confirmation dialog -->
<div class="result" role="dialog">
  <div class="d-flex justify-content-end" style="padding:32px 27px 0 0;height:64px"><svg width="18" height="18"><path d="M1 1l16 16M17 1L1 17" stroke="#353a45" stroke-width="2.300"/></svg></div>
  <svg width="72" height="72" class="mx-auto" style="transform:translateX(-7px)"><circle cx="36" cy="36" r="35.500" fill="#33d065"/><path d="M17 36l12 12 23-22" fill="none" stroke="#0f9737" stroke-width="7.500" stroke-linecap="round"/></svg>
  <div class="text-center med" style="font-size:37px;line-height:60px;margin-top:16px;height:83px"><span data-w="368">Submission Successful</span></div>
  <div class="rrow d-flex justify-content-between" style="margin-top:9px"><span data-w="137">Total Stake</span><span class="val med" data-w="89">200.00</span></div>
  <div class="rrow d-flex justify-content-between" style="margin-top:-2px"><span data-w="168">Potential Win</span><span class="val med" data-w="127">17,830.35</span></div>
  <div class="rrow d-flex align-items-center" style="margin-top:3px"><span data-w="185">Booking Code</span>
    <svg width="28" height="28" style="margin:-3px 0 0 19px;color:#9b9fac"><use href="#info"/></svg>
    <svg width="29" height="31" viewBox="0 0 29 31" style="margin:-2px 0 0 43px" fill="#1b1e25"><circle cx="5" cy="15.500" r="4.500"/><circle cx="24" cy="5" r="4.500"/><circle cx="24" cy="26" r="4.500"/><path d="M24 5L5 15.500 24 26" fill="none" stroke="#1b1e25" stroke-width="2.500"/></svg>
    <svg width="30" height="34" viewBox="0 0 30 34" style="margin:-1px 0 0 19px" fill="none" stroke="#1b1e25" stroke-width="3"><path d="M1.500 26V4q0-2.500 2.500-2.500h18"/><rect x="8" y="8" width="20" height="24.500" rx="2"/></svg>
    <span class="val med ms-auto" data-w="138">3383A93D</span></div>
  <div class="d-flex flex-column align-items-center" style="margin-top:37px">
    <button class="btn text-white med" style="background:#0f9737"><span data-w="37">OK</span></button>
    <button class="btn med" style="color:#0f9737;margin-top:40px"><span data-w="66">Rebet</span></button>
  </div>
  <div class="d-flex align-items-center" style="margin:30px 0 0 373px;line-height:50px;color:#0f9737"><span data-w="228">Check Bet History</span><svg width="16" height="22" style="margin:5px 0 0 29px"><path d="M3 2l9 9-9 9" fill="none" stroke="#0f9737" stroke-width="3.500"/></svg></div>
</div>
<svg class="chat" width="90" height="90"><circle cx="45" cy="45" r="45" fill="#e61b28"/><path d="M32 60q-6-6-6-15 0-19 19-19t19 19-19 19q-3 0-6-1l-7 3z" fill="none" stroke="#fff" stroke-width="4.500" stroke-linejoin="round"/></svg>

<script>
document.querySelectorAll('[data-w]').forEach(function (el) {
  var w = parseFloat(el.dataset.w), n = el.textContent.length;
  el.style.letterSpacing = (w - el.getBoundingClientRect().width) / n + 'px';
});
</script>
</body>
</html>
